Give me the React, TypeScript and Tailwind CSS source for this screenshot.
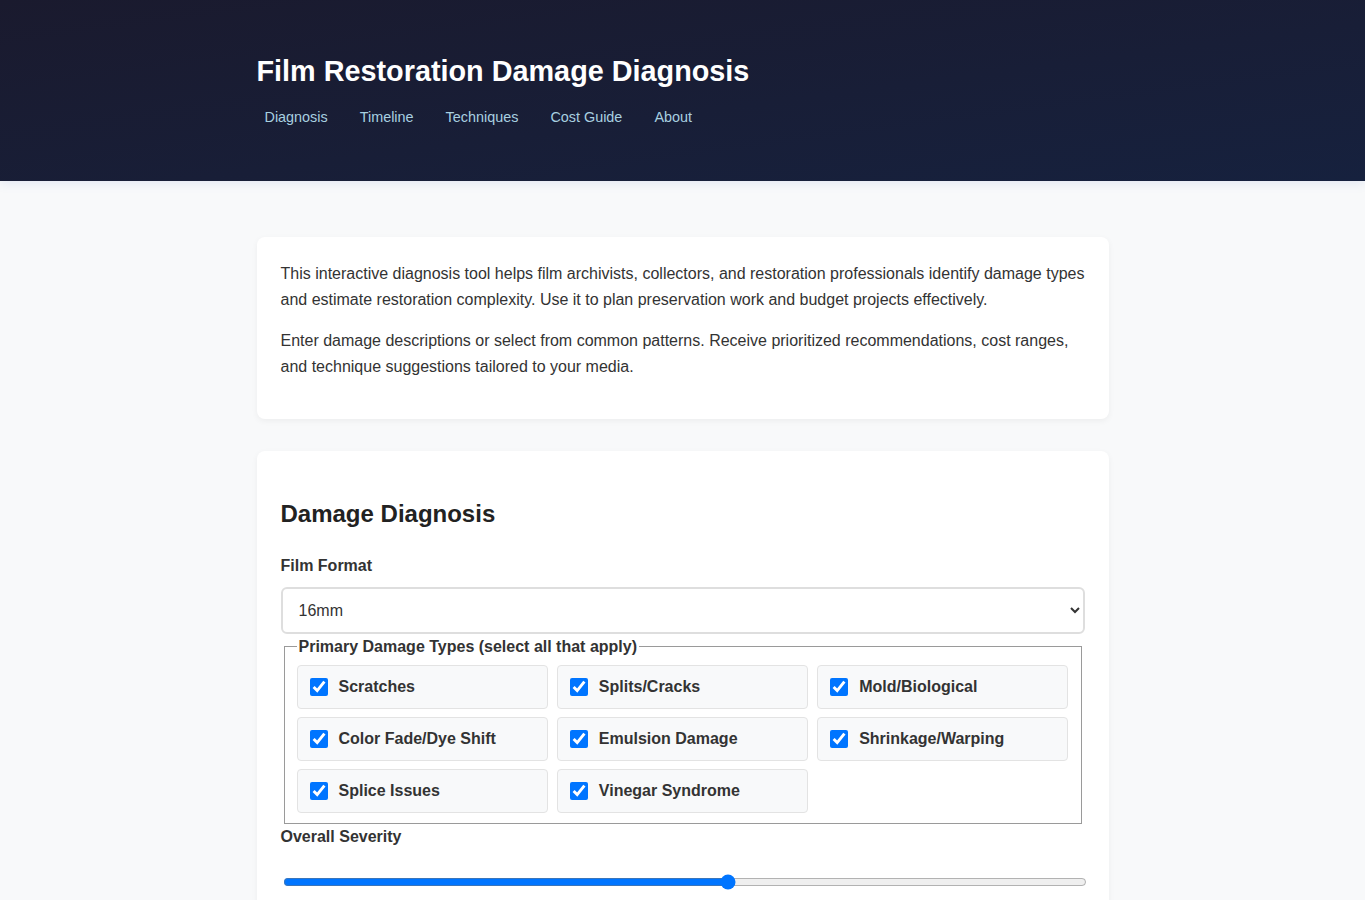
import { useState } from "react";

const navLinks = ["Diagnosis", "Timeline", "Techniques", "Cost Guide", "About"];

const damageTypes = [
  "Scratches",
  "Splits/Cracks",
  "Mold/Biological",
  "Color Fade/Dye Shift",
  "Emulsion Damage",
  "Shrinkage/Warping",
  "Splice Issues",
  "Vinegar Syndrome",
];

const formats = ["8mm", "Super 8", "16mm", "35mm", "70mm"];

export default function App() {
  const [format, setFormat] = useState("16mm");
  const [checked, setChecked] = useState<Record<string, boolean>>(
    Object.fromEntries(damageTypes.map((d) => [d, true]))
  );
  const [severity, setSeverity] = useState(6);

  return (
    <div
      className="min-h-screen bg-[#f8f9fa] leading-[1.6] text-[#333]"
      style={{ fontFamily: '"Liberation Sans", Arial, sans-serif' }}
    >
      <header className="bg-gradient-to-br from-[#1a1a2e] to-[#16213e] pb-[44px] pt-[48px] shadow-[0_2px_10px_rgba(100,130,200,0.15)]">
        <div className="mx-auto max-w-[900px] px-6">
          <h1 className="text-[28.8px] font-bold leading-[46px] text-white">
            Film Restoration Damage Diagnosis
          </h1>
          <nav className="mt-[4px] flex gap-4">
            {navLinks.map((link) => (
              <a
                key={link}
                href="#"
                className="px-2 py-2 text-[14.4px] text-[#a8d0e0] no-underline"
              >
                {link}
              </a>
            ))}
          </nav>
        </div>
      </header>

      <main className="mx-auto max-w-[900px] px-6 pt-14">
        <section className="mb-8 rounded-lg bg-white p-6 shadow-[0_2px_6px_rgba(0,0,0,0.05)]">
          <p className="mb-4">
            This interactive diagnosis tool helps film archivists, collectors, and restoration
            professionals identify damage types and estimate restoration complexity. Use it to plan
            preservation work and budget projects effectively.
          </p>
          <p className="mb-4">
            Enter damage descriptions or select from common patterns. Receive prioritized
            recommendations, cost ranges, and technique suggestions tailored to your media.
          </p>
        </section>

        <section className="rounded-lg bg-white px-6 pt-6 pb-6 shadow-[0_2px_6px_rgba(0,0,0,0.05)]">
          <h2 className="my-5 text-2xl font-bold leading-[38px] text-[#222]">Damage Diagnosis</h2>

          <label className="mb-2 block font-bold">Film Format</label>
          <select
            className="block w-full rounded-md border-2 border-[#dedede] bg-white p-3 text-base text-[#333]"
            value={format}
            onChange={(e) => setFormat(e.target.value)}
          >
            {formats.map((f) => (
              <option key={f}>{f}</option>
            ))}
          </select>

          <fieldset className="mx-[3px] border border-[#9a9a9a] px-3 pt-[5px] pb-[10px]">
            <legend className="px-0.5 font-bold">Primary Damage Types (select all that apply)</legend>
            <div className="grid grid-cols-3 gap-x-[9px] gap-y-2">
              {damageTypes.map((d) => (
                <label
                  key={d}
                  className="flex items-center gap-[11px] rounded border border-[#e3e3e3] bg-[#f8f9fa] p-3 font-bold leading-[18px]"
                >
                  <input
                    type="checkbox"
                    className="h-[18px] w-[18px]"
                    checked={checked[d]}
                    onChange={() => setChecked({ ...checked, [d]: !checked[d] })}
                  />
                  {d}
                </label>
              ))}
            </div>
          </fieldset>

          <label className="mb-2 block font-bold">Overall Severity</label>
          <input
            type="range"
            min={1}
            max={10}
            value={severity}
            onChange={(e) => setSeverity(Number(e.target.value))}
            className="ml-[2px] mt-[25px] block w-full"
          />
          <div className="h-20" />
        </section>
      </main>
    </div>
  );
}
